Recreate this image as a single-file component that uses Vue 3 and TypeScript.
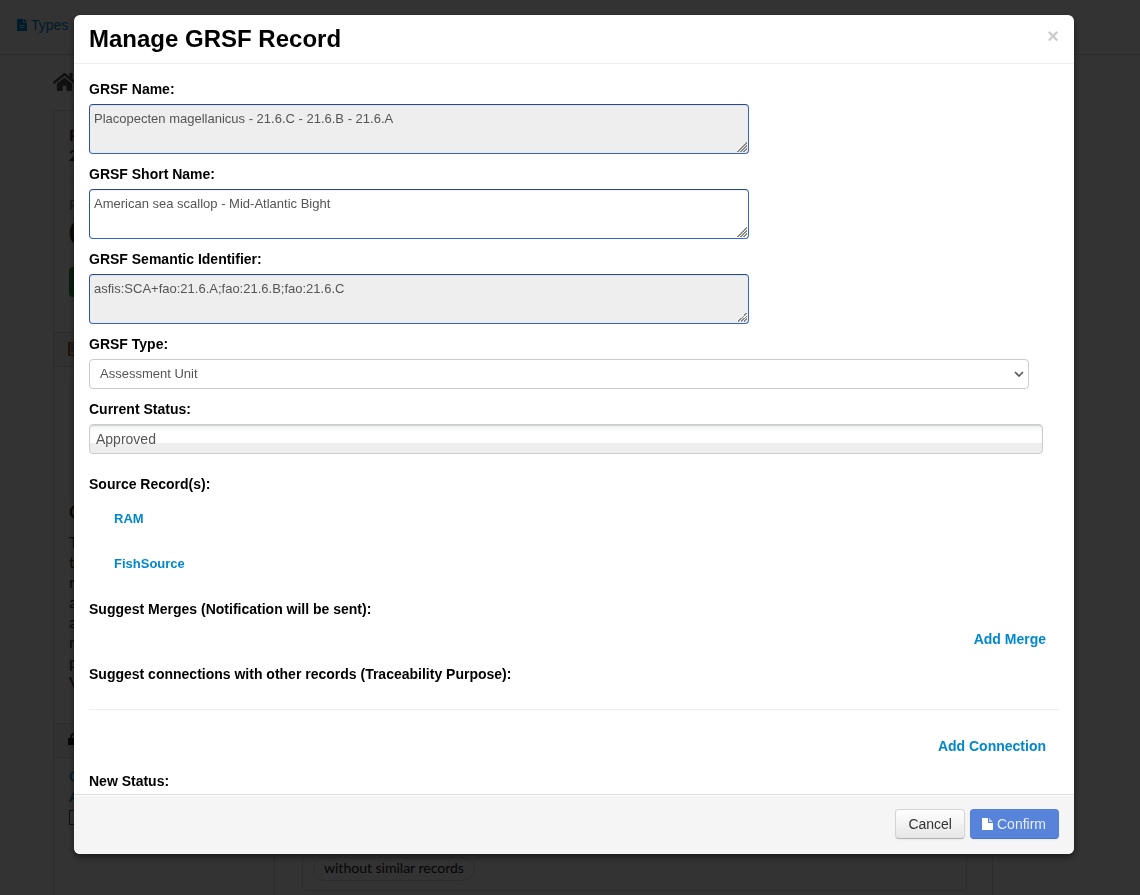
<script setup lang="ts">
import { ref } from 'vue'

interface TextField {
  id: string
  label: string
  value: string
  locked: boolean
}

const fields = ref<TextField[]>([
  { id: 'grsf-name', label: 'GRSF Name:', value: 'Placopecten magellanicus - 21.6.C - 21.6.B - 21.6.A', locked: true },
  { id: 'short-name', label: 'GRSF Short Name:', value: 'American sea scallop - Mid-Atlantic Bight', locked: false },
  { id: 'semantic-id', label: 'GRSF Semantic Identifier:', value: 'asfis:SCA+fao:21.6.A;fao:21.6.B;fao:21.6.C', locked: true }
])
const recordType = ref('Assessment Unit')
const currentStatus = ref('Approved')
const sources: string[] = ['RAM', 'FishSource']
const notes: string[] = ['T', 't', 'r', 'a', 'a', 'r', 'p', 'V']
</script>

<template>
  <div class="page">
    <header class="topbar">
      <a href="#" class="types">
        <svg class="types-icon" viewBox="0 0 384 512" preserveAspectRatio="none" aria-hidden="true">
          <path fill="currentColor" d="M224 136V0H24C11 0 0 11 0 24v464c0 13 11 24 24 24h336c13 0 24-11 24-24V160H248c-13 0-24-11-24-24zm64 236c0 7-5 12-12 12H108c-7 0-12-5-12-12v-8c0-7 5-12 12-12h168c7 0 12 5 12 12zm0-96c0 7-5 12-12 12H108c-7 0-12-5-12-12v-8c0-7 5-12 12-12h168c7 0 12 5 12 12zM384 122v6H256V0h6c6 0 12 3 17 7l98 98c4 5 7 11 7 17z" />
        </svg>
        <span>Types</span>
      </a>
    </header>
    <main class="container">
      <a href="#" class="home" aria-label="Home">
        <svg viewBox="0 0 576 448" aria-hidden="true">
          <path fill="currentColor" d="M280 116 96 268v164c0 9 7 16 16 16h112c9 0 16-7 16-16v-96c0-9 7-16 16-16h64c9 0 16 7 16 16v96c0 9 7 16 16 16h112c9 0 16-7 16-16V268L296 116c-5-4-11-4-16 0zm292 103-84-69V12c0-7-5-12-12-12h-56c-7 0-12 5-12 12v72L319 11c-18-15-44-15-62 0L4 219c-5 4-6 12-1 17l25 31c4 5 12 6 17 2l235-194c5-4 11-4 16 0l235 194c5 4 13 3 17-2l25-31c5-5 4-13-1-17z" />
        </svg>
      </a>
      <div class="wrapper">
        <aside class="sidebar">
          <section class="summary">
            <strong class="name">P<br />2</strong>
            <div class="followers">F</div>
            <strong class="count">0</strong>
            <div class="follow"></div>
          </section>
          <div class="side-heading">
            <svg class="book" viewBox="0 0 14 14" aria-hidden="true">
              <rect x="0" y="0" width="14" height="14" fill="#a85c20" />
              <path d="M2 1h12v12H2z" fill="#c9c4bb" />
              <path d="M3 3h9M3 6h9M3 9h9" stroke="#555" />
            </svg>
          </div>
          <section class="group">
            <div class="group-image"></div>
            <strong class="group-title">G</strong>
            <div v-for="(note, i) in notes" :key="i">{{ note }}</div>
          </section>
          <div class="side-heading">
            <svg class="lock" viewBox="0 0 14 14" aria-hidden="true">
              <path d="M3 6V4a3 3 0 0 1 6 0v2" fill="none" stroke="#444" stroke-width="2" />
              <rect x="0" y="5" width="14" height="7" fill="#222" />
            </svg>
          </div>
          <section class="license">
            <a href="#">O<br />A</a>
            <div class="badge"></div>
          </section>
        </aside>
        <div class="primary">
          <div class="tag-box">
            <span class="pill">without similar records</span>
          </div>
        </div>
      </div>
    </main>
  </div>

  <div class="backdrop">
    <form class="modal" role="dialog" aria-modal="true" aria-labelledby="modal-title" @submit.prevent>
      <header class="modal-header">
        <h1 id="modal-title">Manage GRSF Record</h1>
        <button type="button" class="close" aria-label="Close">×</button>
      </header>
      <div class="modal-body">
        <div v-for="field in fields" :key="field.id" class="field">
          <label :for="field.id">{{ field.label }}</label>
          <textarea :id="field.id" v-model="field.value" :disabled="field.locked"></textarea>
        </div>
        <div class="field">
          <label for="type">GRSF Type:</label>
          <div class="select-wrap">
            <select id="type" v-model="recordType">
              <option>Assessment Unit</option>
            </select>
            <svg class="chevron" viewBox="0 0 10 6" aria-hidden="true">
              <path d="M1 1l4 4 4-4" fill="none" stroke="#555" stroke-width="1.6" />
            </svg>
          </div>
        </div>
        <div class="field status">
          <label for="status">Current Status:</label>
          <input id="status" v-model="currentStatus" type="text" readonly />
        </div>
        <h2>Source Record(s):</h2>
        <ul class="sources">
          <li v-for="source in sources" :key="source"><a href="#">{{ source }}</a></li>
        </ul>
        <h2>Suggest Merges (Notification will be sent):</h2>
        <div class="action merge"><a href="#">Add Merge</a></div>
        <h2>Suggest connections with other records (Traceability Purpose):</h2>
        <hr />
        <div class="action connect"><a href="#">Add Connection</a></div>
        <h2>New Status:</h2>
      </div>
      <footer class="modal-footer">
        <button type="button" class="btn">Cancel</button>
        <button type="submit" class="btn primary-btn">
          <svg class="file" viewBox="0 0 11 12" aria-hidden="true">
            <path fill="#fff" d="M0 0h6v5h5v7H0z" />
            <path fill="#fff" opacity="0.65" d="M7 0l4 4H7z" />
          </svg>
          <span>Confirm</span>
        </button>
      </footer>
    </form>
  </div>
</template>

<style>
body {
  margin: 0;
  background: #fff;
}
</style>

<style scoped>
* {
  box-sizing: border-box;
}
a {
  color: #0088cc;
  text-decoration: none;
}

.page {
  display: flex;
  flex-direction: column;
  height: 100vh;
  overflow: hidden;
  font: 14px/20px "Liberation Sans", Arial, sans-serif;
  color: #333;
}
.topbar {
  flex: none;
  height: 55px;
  padding: 15px 17px;
  border-bottom: 1px solid #cadcdc;
}
.types {
  display: inline-flex;
  align-items: center;
  gap: 4px;
}
.types-icon {
  width: 10px;
  height: 12px;
}
.container {
  flex: 1;
  display: flex;
  flex-direction: column;
  min-height: 0;
  margin: 0 147px 0 53px;
}
.home {
  flex: none;
  height: 55px;
  padding-top: 18px;
  color: #505050;
}
.home svg {
  display: block;
  width: 23px;
  height: 18px;
}
.wrapper {
  flex: 1;
  display: flex;
  min-height: 0;
  border: 1px solid #ddd;
  border-bottom: 0;
  border-radius: 3px 3px 0 0;
}
.sidebar {
  flex: none;
  width: 221px;
  border-right: 1px solid #ddd;
  font-family: Lato, sans-serif;
}
.summary {
  height: 221px;
  padding: 14px 15px 0;
}
.summary strong,
.followers {
  display: block;
}
.name {
  font-size: 16px;
  padding-bottom: 16px;
  border-bottom: 1px solid #eee;
  margin-bottom: 13px;
}
.followers {
  font-size: 14px;
  color: #777;
}
.count {
  font-size: 30px;
  line-height: 34px;
}
.follow {
  height: 30px;
  margin-top: 18px;
  border-radius: 4px;
  background: #2f9b45;
}
.side-heading {
  height: 35px;
  padding: 9px 14px;
  background: #f6f6f6;
  border: 1px solid #ddd;
  border-width: 1px 0;
}
.side-heading svg {
  display: block;
  width: 14px;
  height: 14px;
}
.group {
  height: 356px;
  padding: 15px 15px 0;
  font-size: 16px;
}
.group-image {
  height: 120px;
  background: #f1f1f1;
}
.group-title {
  display: block;
  margin-bottom: 10px;
  font-size: 18px;
}
.license {
  padding: 8px 15px;
  font-size: 16px;
}
.badge {
  width: 80px;
  height: 15px;
  margin-top: 4px;
  border: 1px solid #555;
}
.primary {
  flex: 1;
  display: flex;
  padding: 0 25px 4px 27px;
}
.tag-box {
  flex: 1;
  display: flex;
  align-items: flex-end;
  padding: 0 10px 9px;
  border: 1px solid #ddd;
  border-radius: 4px;
}
.pill {
  padding: 0 10px 2px;
  border: 1px solid #ddd;
  border-radius: 100px;
  font-family: Lato, sans-serif;
  color: #222;
}

.backdrop {
  position: fixed;
  inset: 0;
  overflow: auto;
  padding: 15px 66px 41px 74px;
  background: rgba(0, 0, 0, 0.8);
  font: 14px/20px "Liberation Sans", Arial, sans-serif;
}
.modal {
  overflow: hidden;
  margin: 0;
  background: #fff;
  border-radius: 6px;
  box-shadow: 0 3px 7px rgba(0, 0, 0, 0.5);
}
.modal-header {
  display: flex;
  align-items: center;
  justify-content: space-between;
  padding: 9px 15px;
  border-bottom: 1px solid #eee;
}
h1 {
  margin: 0;
  font-size: 24px;
  line-height: 30px;
  color: #000;
}
h2 {
  margin: 0;
  font-size: 14px;
  line-height: 20px;
}
.close {
  padding: 0 0 6px;
  border: 0;
  background: none;
  font: bold 20px/20px "Liberation Sans", Arial, sans-serif;
  color: #ccc;
}
.modal-body {
  padding: 15px 15px 3px;
}
.field {
  margin-bottom: 10px;
}
.field label {
  display: block;
  margin-bottom: 5px;
  font-weight: bold;
}
textarea {
  display: block;
  width: 100%;
  max-width: 660px;
  height: 50px;
  padding: 4px;
  border: 1px solid #3366cc;
  border-top-color: #26488d;
  border-left-color: #2b55a8;
  border-radius: 4px;
  background: #fff;
  font: 13px/20px "Liberation Sans", Arial, sans-serif;
  color: #555;
  box-shadow: inset 0 1px 1px rgba(0, 0, 0, 0.05);
}
textarea:disabled {
  background: #eee;
}
textarea::-webkit-resizer {
  background: linear-gradient(135deg, transparent 50%, #888 50% 58%, transparent 58% 65%, #888 65% 73%, transparent 73% 80%, #888 80% 88%, transparent 88%) right 1px bottom 1px / 10px 10px no-repeat;
}
.select-wrap {
  position: relative;
  margin-right: 30px;
}
select {
  display: block;
  appearance: none;
  width: 100%;
  height: 30px;
  padding: 0 10px;
  border: 1px solid #ccc;
  border-radius: 4px;
  background: #fff;
  font: 13px/20px "Liberation Sans", Arial, sans-serif;
  color: #555;
}
.chevron {
  position: absolute;
  top: 12px;
  right: 5px;
  width: 10px;
  height: 6px;
  pointer-events: none;
}
.status {
  margin: 0 16px 20px 0;
}
.status input {
  display: block;
  width: 100%;
  height: 30px;
  padding: 4px 6px;
  border: 1px solid #ccc;
  border-radius: 4px;
  background: linear-gradient(#f1f3f3, #fff 8px, #fff 18px, #eee 18px);
  font: 14px/20px "Liberation Sans", Arial, sans-serif;
  color: #555;
  box-shadow: inset 0 1px 1px rgba(0, 0, 0, 0.15);
}
.sources {
  margin: 15px 0 0 25px;
  padding: 0;
  list-style: none;
  font-size: 13px;
  font-weight: bold;
}
.sources li {
  margin-bottom: 25px;
}
.action {
  padding-right: 13px;
  text-align: right;
  font-weight: bold;
}
.merge {
  margin: 10px 0 15px;
}
.connect {
  margin-bottom: 15px;
}
hr {
  height: 1px;
  margin: 25px 0 26px;
  border: 0;
  background: #eee;
}
.modal-footer {
  display: flex;
  justify-content: flex-end;
  gap: 5px;
  padding: 14px 15px 15px;
  border-top: 1px solid #ddd;
  background: #f5f5f5;
  box-shadow: inset 0 1px 0 #fff;
}
.btn {
  display: flex;
  align-items: center;
  height: 30px;
  padding: 0 12px;
  border: 1px solid #d4d4d4;
  border-bottom-color: #b3b3b3;
  border-radius: 4px;
  background: linear-gradient(#fff, #e6e6e6);
  font: 14px/20px "Liberation Sans", Arial, sans-serif;
  color: #333;
  box-shadow: 0 1px 2px rgba(0, 0, 0, 0.05);
}
.primary-btn {
  gap: 4px;
  padding: 0 12px 0 11px;
  border-color: #5380da #5380da #4a73c4;
  background: #5783db;
  color: #e6edfa;
}
.file {
  width: 11px;
  height: 12px;
}
</style>
